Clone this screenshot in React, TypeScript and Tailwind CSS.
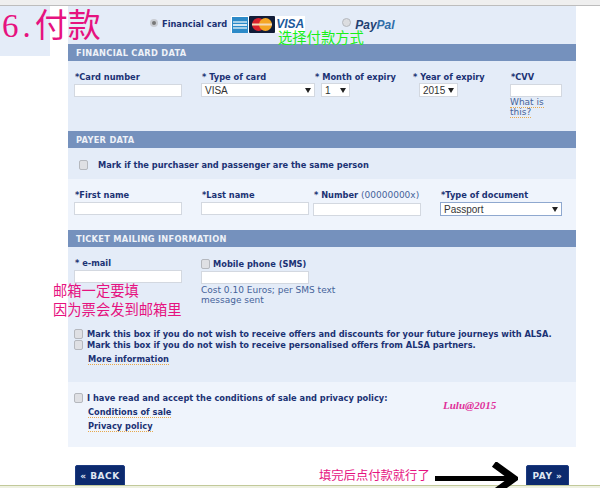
const labelCls = "block text-[8.25px] leading-[11px] font-bold text-[#1b3274] font-['DejaVu_Sans',sans-serif] whitespace-nowrap"
const inputCls = "block h-[13px] border border-[#d3d8e0] bg-white"
const linkCls = "text-[8.25px] leading-[11px] font-bold text-[#1b3274] border-b border-dotted border-[#e8a94c] font-['DejaVu_Sans',sans-serif] whitespace-nowrap"

function SectionBar({ title }: { title: string }) {
  return (
    <div className="h-[17px] flex items-center pl-[8px] pt-[1px] bg-[#7591bd] text-[8.25px] font-bold text-[#eef2f8] tracking-[0.28px] font-['DejaVu_Sans',sans-serif]">
      {title}
    </div>
  )
}

function Check({ className = '' }: { className?: string }) {
  return <input type="checkbox" readOnly className={`appearance-none block shrink-0 w-[9px] h-[10px] rounded-[2px] border border-[#b5b8be] bg-[#dfe0e4] ${className}`} />
}

function FakeSelect({ value, className = '' }: { value: string; className?: string }) {
  return (
    <div className={`flex items-center justify-between h-[14px] border border-[#d3d8e0] bg-white pl-[3px] pr-[3px] text-[10px] text-[#333] font-['Liberation_Sans',sans-serif] ${className}`}>
      <span>{value}</span>
      <span className="w-0 h-0 border-x-[3px] border-x-transparent border-t-[5px] border-t-[#222]" />
    </div>
  )
}

function CardLogos() {
  return (
    <div className="flex items-center gap-[1px] h-[17px] bg-white px-[1px] ml-[4px]">
      <div className="w-[16px] h-[16px] bg-[#2c8ac8] flex flex-col justify-center gap-[1px] px-[1px]">
        <div className="h-[2px] bg-[#a5cfe8]" />
        <div className="h-[2px] bg-[#d6e9f4]" />
        <div className="h-[2px] bg-[#a5cfe8]" />
      </div>
      <svg width="26" height="17" viewBox="0 0 26 17">
        <rect width="26" height="17" rx="1" fill="#111c38" />
        <circle cx="9.5" cy="8.5" r="6.5" fill="#d8202c" />
        <circle cx="16.5" cy="8.5" r="6.5" fill="#f5a623" />
        <rect x="3" y="7.5" width="20" height="2" fill="#f3d9b8" />
      </svg>
      <span className="w-[28px] text-[12px] leading-[17px] font-bold italic text-[#1c5a9c] font-['Liberation_Sans',sans-serif]">VISA</span>
    </div>
  )
}

export default function App() {
  return (
    <div className="relative w-[600px] h-[488px] overflow-hidden bg-white font-['DejaVu_Sans',sans-serif]">
      <div className="h-[6px] bg-[#efefef] border-b border-[#bdbdbd]" />

      <div className="ml-[68px] w-[508px]">
        {/* Payment method */}
        <div className="h-[38px] bg-[#e4ecf8] flex items-center pb-[1px] pl-[82px]">
          <input type="radio" readOnly className="appearance-none block -mt-[4px] w-[8px] h-[8px] rounded-full border-[2px] border-[#c9ccd2] bg-[#777]" />
          <span className="ml-[4px] text-[8.25px] font-bold text-[#1b3274]">Financial card</span>
          <CardLogos />
          <input type="radio" readOnly className="appearance-none block -mt-[4px] w-[9px] h-[9px] ml-[37px] rounded-full border border-[#b5b8be] bg-[#dcdde0]" />
          <span className="ml-[4px] text-[12px] font-bold italic font-['Liberation_Sans',sans-serif]">
            <span className="text-[#1f3f72]">Pay</span><span className="text-[#2f6ea8]">Pal</span>
          </span>
        </div>

        <SectionBar title="FINANCIAL CARD DATA" />
        <div className="h-[70px] bg-[#e4ecf8] grid grid-cols-[127px_113px_99px_97px_1fr] pl-[6px] pt-[11px]">
          <div>
            <span className={`${labelCls} pl-[1px]`}>*Card number</span>
            <div className={`${inputCls} w-[108px] mt-[1px]`} />
          </div>
          <div>
            <span className={`${labelCls} pl-[1px]`}>* Type of card</span>
            <FakeSelect value="VISA" className="w-[114px]" />
          </div>
          <div>
            <span className={`${labelCls} pl-[1px]`}>* Month of expiry</span>
            <FakeSelect value="1" className="w-[29px] ml-[7px]" />
          </div>
          <div>
            <span className={labelCls}>* Year of expiry</span>
            <FakeSelect value="2015" className="w-[39px] ml-[6px]" />
          </div>
          <div>
            <span className={`${labelCls} pl-[1px]`}>*CVV</span>
            <div className={`${inputCls} w-[52px] mt-[1px]`} />
            <div className="w-[40px] text-[9px] leading-[10px] text-[#46639a]">
              <span className="border-b border-dotted border-[#e8a94c]">What is</span>
              <br />
              <span className="border-b border-dotted border-[#e8a94c]">this?</span>
            </div>
          </div>
        </div>

        <SectionBar title="PAYER DATA" />
        <div className="h-[31px] bg-[#e4ecf8] flex items-center pl-[11px] pt-[3px]">
          <Check />
          <span className={`${labelCls} ml-[10px]`}>Mark if the purchaser and passenger are the same person</span>
        </div>
        <div className="h-[51px] bg-[#eff4fc] grid grid-cols-[127px_112px_127px_1fr] pl-[6px] pt-[11px]">
          <div>
            <span className={`${labelCls} pl-[1px]`}>*First name</span>
            <div className={`${inputCls} w-[108px] mt-[1px]`} />
          </div>
          <div>
            <span className={`${labelCls} pl-[1px]`}>*Last name</span>
            <div className={`${inputCls} w-[108px] mt-[1px]`} />
          </div>
          <div>
            <span className={`${labelCls} pl-[1px]`}>
              * Number <span className="font-normal text-[9px] text-[#46639a]">(00000000x)</span>
            </span>
            <div className={`${inputCls} w-[108px] mt-[2px]`} />
          </div>
          <div>
            <span className={`${labelCls} pl-[1px]`}>*Type of document</span>
            <FakeSelect value="Passport" className="w-[122px] mt-[1px] !border-[#8fa8cf]" />
          </div>
        </div>

        <SectionBar title="TICKET MAILING INFORMATION" />
        <div className="h-[135px] bg-[#e4ecf8] pl-[6px] pt-[11px]">
          <div className="grid grid-cols-[127px_1fr] h-[71px]">
            <div>
              <span className={`${labelCls} pl-[1px]`}>* e-mail</span>
              <div className={`${inputCls} w-[108px] mt-[1px] h-[12px]`} />
            </div>
            <div>
              <div className="flex items-center h-[12px]">
                <Check />
                <span className={`${labelCls} ml-[3px]`}>Mobile phone (SMS)</span>
              </div>
              <div className={`${inputCls} w-[108px] mt-[1px] h-[12px]`} />
              <p className="mt-[1px] w-[150px] text-[9px] leading-[10px] text-[#46639a]">
                Cost 0.10 Euros; per SMS text message sent
              </p>
            </div>
          </div>
          <div className="flex items-center h-[10px]">
            <Check />
            <span className={`${labelCls} ml-[4px]`}>Mark this box if you do not wish to receive offers and discounts for your future journeys with ALSA.</span>
          </div>
          <div className="flex items-center h-[10px] mt-[1px]">
            <Check />
            <span className={`${labelCls} ml-[4px]`}>Mark this box if you do not wish to receive personalised offers from ALSA partners.</span>
          </div>
          <div className="pl-[14px] mt-[1px] leading-[11px] h-[12px]">
            <span className={linkCls}>More information</span>
          </div>
        </div>

        <div className="h-[65px] bg-[#eff4fc] pl-[6px] pt-[11px]">
          <div className="flex items-center h-[10px]">
            <Check />
            <span className={`${labelCls} ml-[4px]`}>I have read and accept the conditions of sale and privacy policy:</span>
          </div>
          <div className="pl-[14px] mt-[1px] leading-[11px] h-[12px]">
            <span className={linkCls}>Conditions of sale</span>
          </div>
          <div className="pl-[14px] mt-[2px] leading-[11px] h-[12px]">
            <span className={linkCls}>Privacy policy</span>
          </div>
        </div>

        <div className="flex justify-between pl-[7px] pr-[7px] pt-[18px]">
          <div className="w-[50px] h-[24px] bg-[#0c2a6e] border border-[#1c3a80] rounded-t-[2px] flex items-center justify-center text-[9px] font-bold text-[#dfe6f2] tracking-[0.5px]">
            « BACK
          </div>
          <div className="w-[43px] h-[24px] bg-[#0c2a6e] border border-[#1c3a80] rounded-t-[2px] flex items-center justify-center text-[9px] font-bold text-[#dfe6f2] tracking-[0.5px]">
            PAY »
          </div>
        </div>
      </div>

      {/* strip at the bottom edge of the captured window */}
      <div className="absolute left-0 right-0 bottom-0 h-[3px] bg-[#eef1e2] border-t border-[#c2c99a]" />

      {/* hand-added annotations */}
      <div className="absolute left-0 top-[6px] w-[50px] h-[50px] bg-[#e4ecf8]" />
      <div className="absolute left-[2px] top-[4px] whitespace-nowrap text-[33px] leading-[44px] text-[#e6127f] font-['Liberation_Serif','Noto_Sans_CJK_SC',serif]">
        <span className="tracking-[4px]">6.</span>付款
      </div>
      <div className="absolute left-[278px] top-[29px] whitespace-nowrap text-[14.3px] leading-[16px] text-[#19f019] font-['Noto_Sans_CJK_SC',sans-serif]">
        选择付款方式
      </div>
      <div className="absolute left-[53px] top-[281px] text-[14.3px] leading-[18.5px] text-[#e6127f] font-['Noto_Sans_CJK_SC',sans-serif] whitespace-nowrap">
        邮箱一定要填
        <br />
        因为票会发到邮箱里
      </div>
      <div className="absolute left-[443px] top-[399px] text-[11px] leading-[12px] font-bold italic text-[#e0309a] font-['Liberation_Serif',serif] whitespace-nowrap">
        Lulu@2015
      </div>
      <div className="absolute left-[319px] top-[468px] text-[12.3px] leading-[14px] text-[#e6127f] font-['Noto_Sans_CJK_SC',sans-serif] whitespace-nowrap">
        填完后点付款就行了
      </div>
      <svg className="absolute left-[434px] top-[462px]" width="84" height="26" viewBox="0 0 84 26">
        <path d="M1 16.5H78" stroke="#000" strokeWidth="5" />
        <path d="M60 2L80 16.5L60 31" stroke="#000" strokeWidth="7" fill="none" />
      </svg>
    </div>
  )
}
